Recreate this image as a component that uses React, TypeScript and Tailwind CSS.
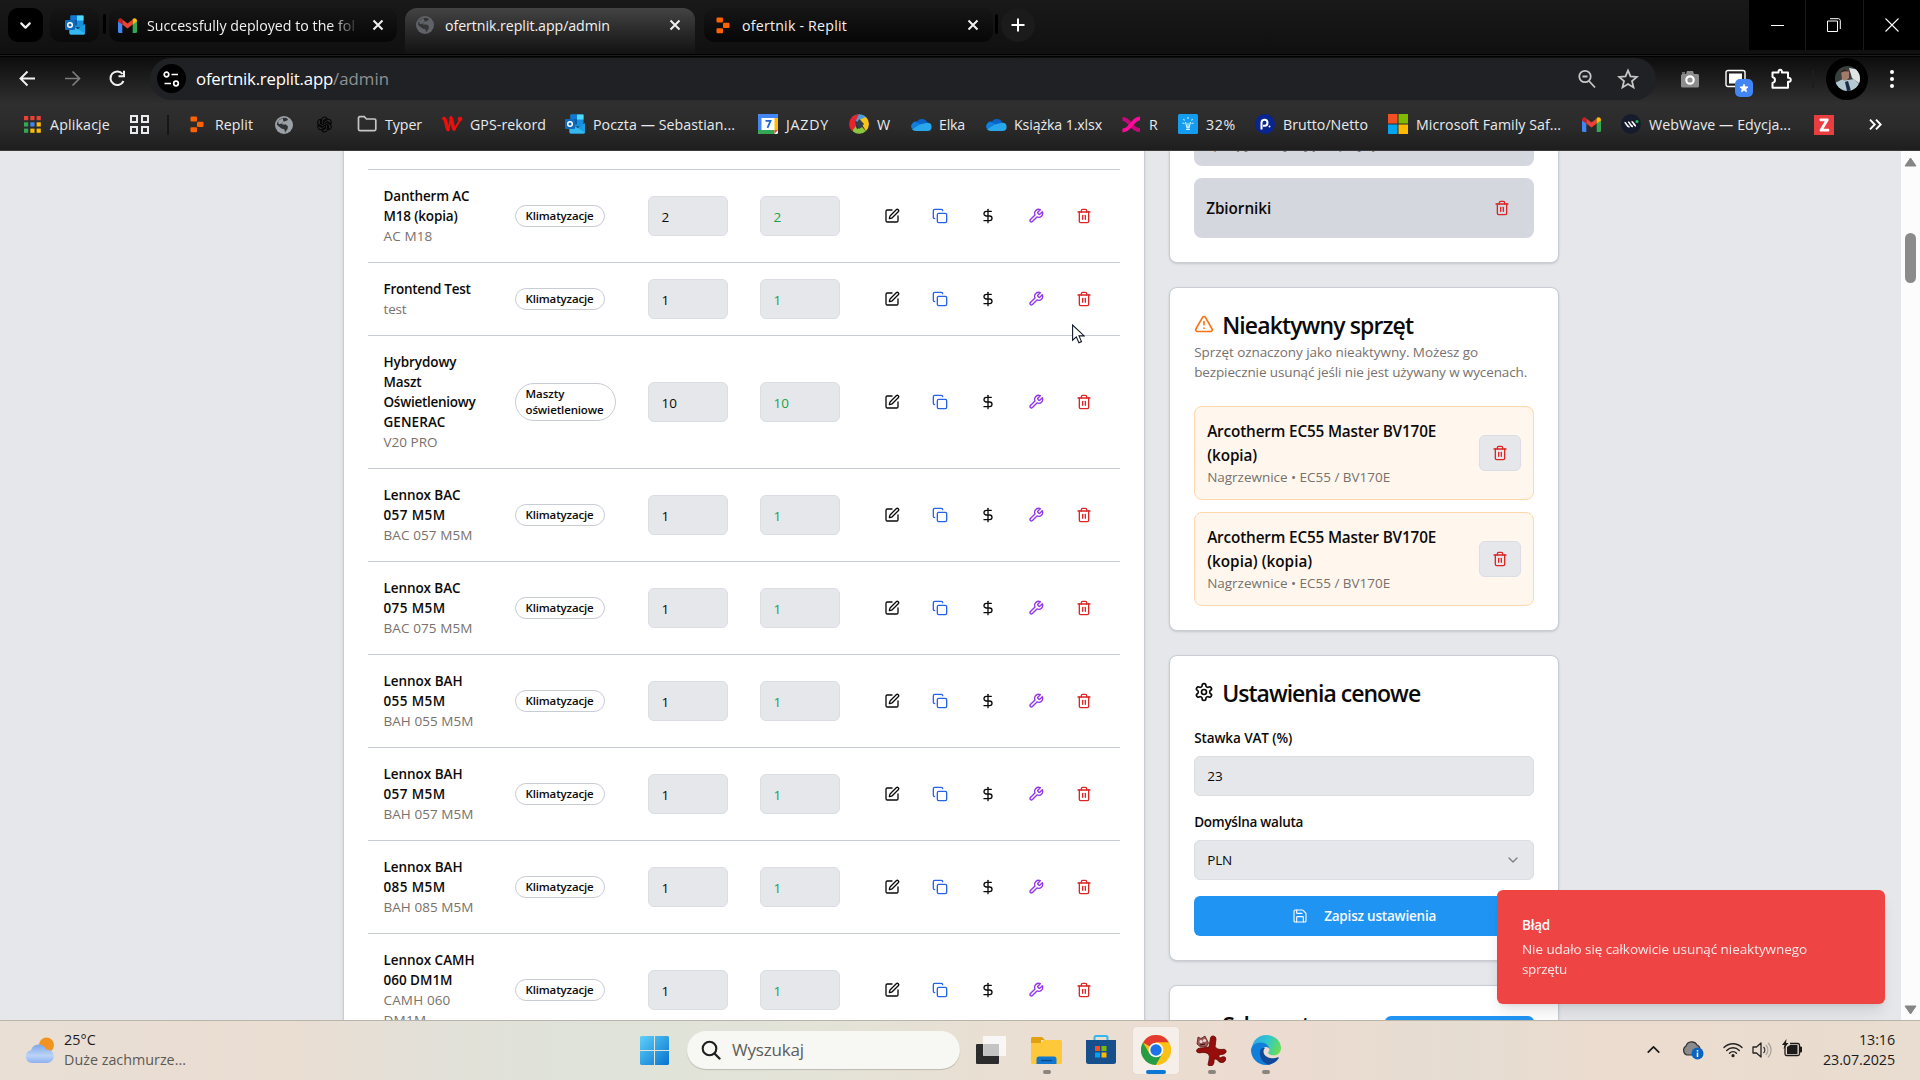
import { useLayoutEffect, useRef, type ReactNode } from "react";
import { ChevronDown, ChevronUp, Copy, DollarSign, SquarePen, Trash2, TriangleAlert, Save } from "lucide-react";

/* Single line of text whose tracking is adjusted so that it spans `w` pixels. */
function Fit({ w, children, className = "" }: { w: number; children: string; className?: string }) {
  const ref = useRef<HTMLSpanElement>(null);
  useLayoutEffect(() => {
    const el = ref.current;
    if (!el) return;
    el.style.letterSpacing = "0px";
    const natural = el.getBoundingClientRect().width;
    el.style.letterSpacing = `${(w - natural) / children.length}px`;
  }, [w, children]);
  return (
    <span ref={ref} className={`inline-block shrink-0 whitespace-nowrap ${className}`}>
      {children}
    </span>
  );
}

/* ---------- icons ---------- */

function Svg({ size = 20, h, box = "0 0 20 20", children }: { size?: number; h?: number; box?: string; children: ReactNode }) {
  return (
    <svg width={size} height={h ?? size} viewBox={box} fill="none" className="block shrink-0">
      {children}
    </svg>
  );
}

const Outlook = () => (
  <Svg>
    <rect x="5.5" y="0.5" width="13" height="12" rx="1" fill="#1490df" />
    <path d="M5.5 4.5h6.5v6H5.5z" fill="#0a5aa8" />
    <path d="M12 0.5h6.5v5H12z" fill="#50d9ff" />
    <path d="M5.5 0.5H12v4H5.5z" fill="#0f78d4" />
    <path d="M4.5 9l8 5 7.5-5v9a1.5 1.5 0 0 1-1.5 1.5h-12.500A1.500 1.500 0 0 1 4.500 18z" fill="#1b9de2" />
    <path d="M4.500 9l15.500 9.500a1.500 1.500 0 0 1-1.500 1H6a1.500 1.500 0 0 1-1.500-1.500z" fill="#35b8f1" />
    <rect x="0" y="5" width="10" height="10" rx="1" fill="#0f6cbd" />
    <circle cx="5" cy="10" r="2.300" stroke="#fff" strokeWidth="1.500" />
  </Svg>
);

const Gmail = () => (
  <Svg size={19} h={15} box="0 0 19 15">
    <path d="M0 3v10.500A1.500 1.500 0 0 0 1.500 15H4.300V6z" fill="#4285f4" />
    <path d="M19 3v10.500a1.500 1.500 0 0 1-1.500 1.500h-2.800V6z" fill="#34a853" />
    <path d="M4.300 1.500l5.200 4 5.200-4v5l-5.200 4-5.200-4z" fill="#ea4335" />
    <path d="M0 3C0 .4 2.600-.5 4.300.9v5.600L0 3.500z" fill="#c5221f" />
    <path d="M19 3c0-2.600-2.600-3.500-4.300-2.100v5.600L19 3.500z" fill="#fbbc04" />
  </Svg>
);

const Globe = ({ dim = false }: { dim?: boolean }) => (
  <Svg size={18} box="0 0 18 18">
    <circle cx="9" cy="9" r="9" fill={dim ? "#5f6368" : "#9aa0a6"} />
    <path
      d="M8 2c3-.5 4.500.5 5 2l-3.500 1.500H8L7 8.500h4l2 2-.5 2.500L10 16.500 9.500 13.500l-3-1L2 9C2 5 4.500 2.600 8 2z"
      fill={dim ? "#353535" : "#303134"}
    />
    <path d="M7.500 2L3 5l.8 3.200 3.200-.7 1.500-2z" fill={dim ? "#5f6368" : "#9aa0a6"} />
  </Svg>
);

const Replit = () => (
  <Svg size={14} h={17} box="0 0 14 17">
    <rect x="0.500" y="0.500" width="6.500" height="5" rx="1" fill="#ff6200" />
    <rect x="7" y="5.800" width="6.500" height="5.200" rx="1" fill="#ff6200" />
    <rect x="0.500" y="11.300" width="6.500" height="5" rx="1" fill="#ff6200" />
  </Svg>
);

const AppsGrid = () => {
  const c = ["#ea4335", "#ea4335", "#ea4335", "#34a853", "#4285f4", "#fbbc04", "#34a853", "#fbbc04", "#fbbc04"];
  return (
    <Svg size={17} box="0 0 17 17">
      {c.map((f, i) => (
        <rect key={i} x={(i % 3) * 6.300} y={Math.floor(i / 3) * 6.300} width="4.200" height="4.200" fill={f} />
      ))}
    </Svg>
  );
};

const FourSquares = () => (
  <Svg size={19} box="0 0 19 19">
    {[[1, 1], [12, 1], [1, 12], [12, 12]].map(([x, y]) => (
      <rect key={`${x}-${y}`} x={x} y={y} width="6" height="6" stroke="#e8eaed" strokeWidth="2" />
    ))}
  </Svg>
);

const OpenAi = () => (
  <Svg size={17} box="0 0 17 17">
    {[0, 60, 120, 180, 240, 300].map((r) => (
      <path key={r} d="M5.500 8.500V4a3 3 0 0 1 5.500-1.600L7.500 4.500v4" stroke="#050505" strokeWidth="1.100" transform={`rotate(${r} 8.500 8.500)`} />
    ))}
  </Svg>
);

const FolderOutline = () => (
  <Svg>
    <path d="M1.500 4A1.300 1.300 0 0 1 2.800 2.700h4.400L9.500 5h8A1.300 1.300 0 0 1 18.800 6.300v9a1.300 1.300 0 0 1-1.300 1.300H2.800a1.300 1.300 0 0 1-1.300-1.300z" stroke="#c4c7c5" strokeWidth="1.700" />
  </Svg>
);

const RedW = () => (
  <Svg size={21} h={16} box="0 0 21 16">
    <path d="M2 2.500C4 3 4 9 6 13.500M9 2c1.500 2 1 8 3 11" stroke="#f20d0d" strokeWidth="3.600" strokeLinecap="round" />
    <path d="M8.500 4L6.500 13M17.500 5L12.500 13" stroke="#f20d0d" strokeWidth="2" strokeLinecap="round" />
    <circle cx="18" cy="3" r="2.300" fill="#f20d0d" />
  </Svg>
);

const Calendar = () => (
  <Svg>
    <rect width="20" height="20" rx="1.500" fill="#fff" />
    <path d="M0 1.500A1.500 1.500 0 0 1 1.500 0h17A1.500 1.500 0 0 1 20 1.500V4H3.500v12H0z" fill="#4285f4" />
    <path d="M16.500 4H20v12h-3.500z" fill="#fbbc04" />
    <path d="M0 16h16.500v4H1.500A1.500 1.500 0 0 1 0 18.500z" fill="#34a853" />
    <path d="M16.500 16H20l-3.500 4z" fill="#ea4335" />
    <path d="M7.500 6.800h5L9.500 13.800" stroke="#1967d2" strokeWidth="1.800" />
  </Svg>
);

const Swirl = () => (
  <Svg>
    <path d="M10 10L3 3A9.800 9.800 0 0 1 10 .2c3 0 5 1 7 2.800z" fill="#4a9fd8" />
    <path d="M10 6l7-3a9.800 9.800 0 0 1 0 14l-3.500-5.500z" fill="#fcc419" />
    <path d="M8 15l5-2 4 4a9.800 9.800 0 0 1-13 .6L2.500 13 6 10z" fill="#8bc53f" />
    <path d="M8 4L6.500 8 7 12l-4 5A9.800 9.800 0 0 1 3 3c1.500-1.300 4-2.500 7-2.600z" fill="#e9222b" />
    <path d="M10.500 5l4.500 5-4.500 5-4-5z" fill="#33414f" />
  </Svg>
);

const OneDrive = () => (
  <Svg size={21} h={13} box="0 0 21 13">
    <path d="M6 3.500A6 6 0 0 1 16.500 5L12 8 4 12A4.300 4.300 0 0 1 6 3.500z" fill="#0a63c9" />
    <path d="M4.500 4A4.500 4.500 0 0 0 1 11l8-5z" fill="#1180dd" />
    <path d="M16.500 4.800A4.100 4.100 0 0 1 16.500 13H4.500A4.500 4.500 0 0 1 1 11.200L8.500 6.500z" fill="#28a8ea" />
  </Svg>
);

const PinkX = () => (
  <Svg size={21} h={17} box="0 0 21 17">
    <path d="M1.500 3c8 0 8 11 17.500 11" stroke="#c7087a" strokeWidth="4" />
    <path d="M19 2.500c-8 0-8.500 12-17.500 12" stroke="#ff0a9c" strokeWidth="3.800" />
  </Svg>
);

const Bulb = () => (
  <Svg>
    <rect width="20" height="20" rx="1.500" fill="#149cf0" />
    <path d="M7.500 8l1.500 6h2l1.500-6M8 15.500h4M10 9v5M10 3v2M5.500 5l1 1.500M14.500 5l-1 1.500M4.500 9l2 .5M15.500 9l-2 .5" stroke="#cdefff" strokeWidth="1.100" />
  </Svg>
);

const NavyP = () => (
  <Svg>
    <circle cx="10" cy="10" r="10" fill="#0a2490" />
    <path d="M6.500 15.500V8.500a3 3 0 1 1 3.200 3.300H8" stroke="#fff" strokeWidth="2" />
    <circle cx="14.500" cy="12.500" r="1" fill="#fff" />
  </Svg>
);

const MsSquares = () => (
  <Svg>
    <path d="M0 0h9.500v9.500H0z" fill="#f25022" />
    <path d="M10.500 0H20v9.500h-9.500z" fill="#7fba00" />
    <path d="M0 10.500h9.500V20H0z" fill="#00a4ef" />
    <path d="M10.500 10.500H20V20h-9.500z" fill="#ffb900" />
  </Svg>
);

const WebWave = () => (
  <Svg>
    <circle cx="10" cy="10" r="10" fill="#161c2b" />
    <path d="M3.500 8.500c2 0 2 4.500 5 4.500M7 8c2 0 2 4.500 5 4.500M10.500 7.500c2 0 2.500 4.500 4.500 4.500" stroke="#fff" strokeWidth="1.700" />
    <circle cx="16" cy="7.500" r="1.500" fill="#22c55e" />
  </Svg>
);

const ZIcon = () => (
  <Svg>
    <rect width="20" height="20" fill="#ea3d40" />
    <path d="M6.800 4.800h6.500L7 15.200h7" stroke="#fff" strokeWidth="2.800" strokeLinejoin="round" strokeLinecap="round" />
  </Svg>
);

const TabX = () => (
  <Svg size={12} box="0 0 12 12">
    <path d="M1.500 1.500l9 9M10.500 1.500l-9 9" stroke="#f1f1f1" strokeWidth="2" />
  </Svg>
);

const Star = ({ size = 22, fill = "none", stroke = "#c7c7c7" }: { size?: number; fill?: string; stroke?: string }) => (
  <Svg size={size} box="0 0 22 22">
    <path d="M11 2.500l2.500 5.900 6.400.5-4.900 4.200 1.500 6.300L11 16l-5.500 3.400L7 13.100 2.100 8.900l6.400-.5z" fill={fill} stroke={stroke} strokeWidth="1.800" />
  </Svg>
);

const Chrome = () => (
  <Svg size={30} box="0 0 30 30">
    <circle cx="15" cy="15" r="15" fill="#fbc116" />
    <path d="M15 15L2 7.500A15 15 0 0 1 28 7.500H15z" fill="#e33b2e" />
    <path d="M2 7.500A15 15 0 0 0 15 30l6.500-11.300L8.500 18.700z" fill="#269c47" />
    <path d="M15 7.500h13A15 15 0 0 1 15 30l6.500-11.200z" fill="#fbc116" />
    <circle cx="15" cy="15" r="7.300" fill="#fff" />
    <circle cx="15" cy="15" r="5.700" fill="#1a73e8" />
  </Svg>
);

const Edge = () => (
  <Svg size={30} box="0 0 30 30">
    <defs>
      <linearGradient id="eg" x1="0" y1="0" x2="30" y2="14" gradientUnits="userSpaceOnUse">
        <stop offset="0" stopColor="#2fa4e7" />
        <stop offset=".5" stopColor="#2fc5d2" />
        <stop offset="1" stopColor="#6be04f" />
      </linearGradient>
    </defs>
    <path d="M1 13C1.500 5.500 7.500 0 15 0c8.500 0 15 5.800 15 13 0 4.500-3 7.300-7 7.300-3.500 0-5.800-1.200-5.800-2.500 0-.8 1.300-1.300 1.300-3.300 0-2.500-3-5.500-7-5.500C6.500 9 2.500 10.500 1 13z" fill="url(#eg)" />
    <path d="M0 15c.3-4.500 4.500-7.500 9.500-7.500 5.500 0 9 3.500 9 7-.5-1.700-2-2.500-3.500-2.500-3 0-4.500 3-4.500 6 0 5.500 5 9.500 10 10.500-1.500 1-3.500 1.500-5.500 1.500C6.700 30 0 23.300 0 15z" fill="#0f7fd9" />
    <path d="M10.500 13.500C7 17 9 28 18 29.700c4-.7 7.500-3.200 9.700-6.500.4-.7-.2-1.200-.9-.9-1.500.6-3 .9-4.800.9-6 0-9.500-3.200-9.500-6.700 0-1.500.5-2.500 1.500-3.500-1.500-.5-2.800-.3-3.500.5z" fill="#10499a" />
  </Svg>
);

const RedSplat = () => (
  <Svg size={31} box="0 0 31 31">
    <path
      d="M13 12L14.500 3Q15 .5 17.500 1t2.500 3L19 12q3 3 6 2.500 4-1 5 1t-2 3.500l-5 1q-.5 2 1 3 3-2 5-1 1.500 2 0 4t-4 1.500-4-3q-2-1-3 0v3q-.5 3-3 3.500t-3-1.500L13 25q1-4-.5-6-3-2-6-1.500-4 1-5.500-.500T2 13.500z"
      fill="#960d0b"
      stroke="#5c0705"
      strokeWidth=".8"
    />
    <path d="M2 2l3 1.500L9 1l1.500 3 2 4-2 3.500-6 .5L1 9z" fill="#9a5b58" stroke="#5c0705" strokeWidth=".7" />
    <circle cx="5" cy="6.500" r="1.600" fill="#e8dcdc" />
    <circle cx="8.500" cy="5.500" r="1.600" fill="#e8dcdc" />
    <path d="M4 10l5-1" stroke="#3b0a09" />
  </Svg>
);

/* ---------- browser chrome ---------- */

function TabStrip() {
  return (
    <div className="flex h-[54px] items-start bg-gradient-to-b from-[#191919] to-[#101010] text-[14.2px] text-[#f1f1f1]">
      <div className="ml-2 mt-2 flex h-[34px] w-[35px] items-center justify-center rounded-[10px] bg-black">
        <ChevronDown size={17} strokeWidth={3} />
      </div>
      <div className="ml-[7px] mt-2 flex h-[34px] w-[49px] items-center justify-center rounded-[10px] bg-gradient-to-b from-[#161616] to-[#0a0a0a]">
        <Outlook />
      </div>
      <div className="ml-1 mt-[14px] h-5 w-[3px] rounded bg-black" />
      <div className="ml-[3px] mt-2 flex h-[34px] w-[288px] items-center rounded-[10px] bg-gradient-to-b from-[#161616] to-[#070707] pl-[9px]">
        <Gmail />
        <div className="ml-[10px] w-[209px] overflow-hidden pt-px [mask-image:linear-gradient(to_right,black_88%,transparent_102%)]">
          <Fit w={208}>Successfully deployed to the fol</Fit>
        </div>
        <div className="ml-[16px]"><TabX /></div>
      </div>
      <div className="ml-2 mt-2 flex h-[46px] w-[290px] items-start rounded-t-[12px] bg-gradient-to-b from-[#444444] to-[#121212] pl-[11px]">
        <div className="mt-[8px]"><Globe dim /></div>
        <div className="ml-[11px] mt-[8px] w-[219px] leading-[20px]">
          <Fit w={165}>ofertnik.replit.app/admin</Fit>
        </div>
        <div className="mt-[11px] ml-[5px]"><TabX /></div>
      </div>
      <div className="ml-[9px] mt-2 flex h-[34px] w-[289px] items-center rounded-[10px] bg-gradient-to-b from-[#161616] to-[#070707] pl-3">
        <Replit />
        <div className="ml-[12px] w-[218px] pt-px">
          <Fit w={105}>ofertnik - Replit</Fit>
        </div>
        <div className="ml-[7px]"><TabX /></div>
      </div>
      <div className="ml-[2px] mt-[14px] h-5 w-[3px] rounded bg-black" />
      <div className="ml-[3px] mt-2 flex size-[34px] items-center justify-center rounded-full bg-[#1b1b1b]">
        <Svg size={14} box="0 0 14 14">
          <path d="M7 .5v13M.5 7h13" stroke="#fff" strokeWidth="2" />
        </Svg>
      </div>
      <div className="ml-auto flex h-[50px] w-[171px] gap-px bg-[#1a1a1a]">
        <div className="flex flex-1 items-center justify-center bg-black">
          <div className="h-px w-[13px] bg-white" />
        </div>
        <div className="flex flex-1 items-center justify-center bg-black">
          <Svg size={14} box="0 0 14 14">
            <path d="M.5 3h10v10.500H.5z" stroke="#fff" />
            <path d="M3 .7h8.500A2 2 0 0 1 13.300 2.500V11" stroke="#fff" />
          </Svg>
        </div>
        <div className="flex flex-1 items-center justify-center bg-black">
          <Svg size={14} box="0 0 14 14">
            <path d="M.5.500l13 13M13.500.500l-13 13" stroke="#fff" strokeWidth="1.100" />
          </Svg>
        </div>
      </div>
    </div>
  );
}

function Toolbar() {
  return (
    <div className="flex h-[43px] items-center">
      <div className="ml-[19px]">
        <Svg size={17} box="0 0 17 17">
          <path d="M16 8.500H2M8.500 1.500l-7 7 7 7" stroke="#f1f1f1" strokeWidth="1.900" />
        </Svg>
      </div>
      <div className="ml-[28px]">
        <Svg size={17} box="0 0 17 17">
          <path d="M1 8.500h14M8.500 1.500l7 7-7 7" stroke="#7d7d7d" strokeWidth="1.700" />
        </Svg>
      </div>
      <div className="ml-[28px]">
        <Svg size={17} box="0 0 17 17">
          <path d="M14.500 11A6.800 6.800 0 1 1 13.600 4M15 .8v5.500H9.500" stroke="#f1f1f1" strokeWidth="2" />
        </Svg>
      </div>
      <div className="ml-[24px] flex h-[42px] w-[1506px] items-center rounded-full bg-[#202124] pl-[7px]">
        <div className="flex size-[29px] items-center justify-center rounded-full bg-black">
          <Svg size={17} h={16} box="0 0 17 16">
            <circle cx="3.500" cy="3.500" r="2.300" stroke="#fff" strokeWidth="1.700" />
            <circle cx="13" cy="12.500" r="2.300" stroke="#fff" strokeWidth="1.700" />
            <path d="M8.500 3.500H15M1.500 12.500H8" stroke="#fff" strokeWidth="1.700" />
          </Svg>
        </div>
        <div className="ml-[10px] flex flex-1 pt-px text-[16.800px] leading-6 text-white">
          <Fit w={137}>ofertnik.replit.app</Fit>
          <Fit w={56} className="text-[#8f9194]">/admin</Fit>
        </div>
        <Svg size={20}>
          <circle cx="8" cy="7.500" r="5.700" stroke="#c7c7c7" strokeWidth="1.800" />
          <path d="M12 12l6 6.500M5.500 7.500h5" stroke="#c7c7c7" strokeWidth="1.800" />
        </Svg>
        <div className="ml-[20px] mr-[17px]"><Star /></div>
      </div>
      <div className="ml-[24px] pt-px">
        <Svg size={20}>
          <path d="M2 5h4l1-3h6l1 3h3.500A1.500 1.500 0 0 1 19 6.500V17a1.500 1.500 0 0 1-1.500 1.500h-15A1.500 1.500 0 0 1 1 17V6.500z" fill="#8c8c8c" />
          <path d="M2 4h3" stroke="#8c8c8c" strokeWidth="1.500" />
          <circle cx="10" cy="11" r="3.700" fill="#8c8c8c" stroke="#fff" strokeWidth="2.200" />
        </Svg>
      </div>
      <div className="relative ml-[25px]">
        <Svg size={22} h={20} box="0 0 22 20">
          <rect x="1" y="1.500" width="19" height="16" rx="2" stroke="#fff" strokeWidth="1.400" fill="#1c1c1c" />
          <path d="M4 4.500h13v10H4z" fill="#fff" />
        </Svg>
        <div className="absolute left-[10px] top-[10px] flex size-[18px] items-center justify-center rounded-[5px] bg-[#4285f4]">
          <Star size={10} fill="#fff" stroke="#fff" />
        </div>
      </div>
      <div className="ml-[23px]">
        <Svg size={22} box="0 0 22 22">
          <path d="M2.500 4.500h6q-.2-2.700 1.700-2.700t1.700 2.700H18v5.300q2.800-.2 2.800 2t-2.800 2v6H2.500V15q2.500-.8 2.500-3t-2.500-3z" stroke="#fff" strokeWidth="2" strokeLinejoin="round" />
        </Svg>
      </div>
      <div className="ml-[20px] h-[18px] w-[2px] bg-[#1d1d1d]" />
      <div className="ml-[12px] flex size-[42px] items-center justify-center rounded-full bg-black">
        <Svg size={25} box="0 0 25 25">
          <clipPath id="av"><circle cx="12.500" cy="12.500" r="12.500" /></clipPath>
          <g clipPath="url(#av)">
            <path d="M0 0h25v25H0z" fill="#37403f" />
            <path d="M14 2l11 2v14l-8-6z" fill="#dfe3e4" />
            <path d="M0 17l8-4 5 1 6-1 6 6v6H0z" fill="#b3c8d1" />
            <path d="M6 5q4-4 8 0v7q-4 5-7 1z" fill="#a3796a" />
            <path d="M5.500 6q4-6 9 0l-1-.5q-4-1-7 1z" fill="#2b2422" />
            <path d="M10 16l3-1 3 10h-4z" fill="#1b2b47" />
          </g>
        </Svg>
      </div>
      <div className="ml-[21px]">
        <Svg size={6} h={20} box="0 0 6 20">
          <circle cx="3" cy="3" r="2" fill="#fff" />
          <circle cx="3" cy="10" r="2" fill="#fff" />
          <circle cx="3" cy="17" r="2" fill="#fff" />
        </Svg>
      </div>
    </div>
  );
}

function Bookmark({ box, icon, label, w = 0 }: { box: string; icon: ReactNode; label?: string; w?: number }) {
  return (
    <div className={`flex shrink-0 items-center gap-2 ${box}`}>
      <div className="flex w-5 shrink-0 justify-center">{icon}</div>
      {label && <Fit w={w}>{label}</Fit>}
    </div>
  );
}

function Bookmarks() {
  return (
    <div className="flex h-[49px] items-center pl-[22px] text-[14.200px] text-[#e8eaed]">
      <Bookmark box="w-[107px]" icon={<AppsGrid />} label="Aplikacje" w={60} />
      <Bookmark box="w-[38px]" icon={<FourSquares />} />
      <div className="mr-[18px] h-5 w-[2px] bg-[#161616]" />
      <Bookmark box="w-[87px]" icon={<Replit />} label="Replit" w={38} />
      <Bookmark box="w-10" icon={<Globe />} />
      <Bookmark box="w-[43px]" icon={<OpenAi />} />
      <Bookmark box="w-[85px]" icon={<FolderOutline />} label="Typer" w={37} />
      <Bookmark box="w-[123px]" icon={<RedW />} label="GPS-rekord" w={76} />
      <Bookmark box="w-[193px]" icon={<Outlook />} label="Poczta — Sebastian..." w={142} />
      <Bookmark box="w-[91px]" icon={<Calendar />} label="JAZDY" w={43} />
      <Bookmark box="w-[62px]" icon={<Swirl />} label="W" w={14} />
      <Bookmark box="w-[75px]" icon={<OneDrive />} label="Elka" w={26} />
      <Bookmark box="w-[135px]" icon={<OneDrive />} label="Książka 1.xlsx" w={88} />
      <Bookmark box="w-[57px]" icon={<PinkX />} label="R" w={9} />
      <Bookmark box="w-[77px]" icon={<Bulb />} label="32%" w={30} />
      <Bookmark box="w-[133px]" icon={<NavyP />} label="Brutto/Netto" w={85} />
      <Bookmark box="w-[193px]" icon={<MsSquares />} label="Microsoft Family Saf..." w={145} />
      <Bookmark box="w-10" icon={<Gmail />} />
      <Bookmark box="w-[193px]" icon={<WebWave />} label="WebWave — Edycja..." w={142} />
      <Bookmark box="w-[51px]" icon={<ZIcon />} />
      <Bookmark
        box="w-5"
        icon={
          <Svg size={13} h={11} box="0 0 13 11">
            <path d="M1 .7l4.700 4.800L1 10.300M7 .7l4.700 4.800L7 10.300" stroke="#fff" strokeWidth="1.900" />
          </Svg>
        }
      />
    </div>
  );
}

/* ---------- equipment table ---------- */

type Line = [string, number];
type Row = { name: Line[]; model: Line[]; tag: Line[]; tagBox: string; total: string };

const klima: Line[] = [["Klimatyzacje", 68]];
const rows: Row[] = [
  { name: [["Dantherm AC", 86], ["M18 (kopia)", 74]], model: [["AC M18", 49]], tag: klima, tagBox: "w-[90px]", total: "2" },
  { name: [["Frontend Test", 87]], model: [["test", 23]], tag: klima, tagBox: "w-[90px]", total: "1" },
  {
    name: [["Hybrydowy", 73], ["Maszt", 38], ["Oświetleniowy", 92], ["GENERAC", 62]],
    model: [["V20 PRO", 54]],
    tag: [["Maszty", 39], ["oświetleniowe", 78]],
    tagBox: "w-[101px]",
    total: "10",
  },
  { name: [["Lennox BAC", 77], ["057 M5M", 62]], model: [["BAC 057 M5M", 89]], tag: klima, tagBox: "w-[90px]", total: "1" },
  { name: [["Lennox BAC", 77], ["075 M5M", 62]], model: [["BAC 075 M5M", 89]], tag: klima, tagBox: "w-[90px]", total: "1" },
  { name: [["Lennox BAH", 79], ["055 M5M", 62]], model: [["BAH 055 M5M", 90]], tag: klima, tagBox: "w-[90px]", total: "1" },
  { name: [["Lennox BAH", 79], ["057 M5M", 62]], model: [["BAH 057 M5M", 90]], tag: klima, tagBox: "w-[90px]", total: "1" },
  { name: [["Lennox BAH", 79], ["085 M5M", 62]], model: [["BAH 085 M5M", 90]], tag: klima, tagBox: "w-[90px]", total: "1" },
  { name: [["Lennox CAMH", 91], ["060 DM1M", 69]], model: [["CAMH 060", 67], ["DM1M", 43]], tag: klima, tagBox: "w-[90px]", total: "1" },
];

const WrenchIcon = () => (
  <svg width="16" height="16" viewBox="0 0 24 24" fill="none" stroke="currentColor" strokeWidth="2" strokeLinecap="round" strokeLinejoin="round">
    <path d="M14.700 6.300a1 1 0 0 0 0 1.400l1.600 1.600a1 1 0 0 0 1.400 0l3.770-3.770a6 6 0 0 1-7.940 7.940l-6.910 6.910a2.120 2.120 0 0 1-3-3l6.910-6.910a6 6 0 0 1 7.940-7.940l-3.760 3.760z" />
  </svg>
);

const GearIcon = () => (
  <svg width="20" height="20" viewBox="0 0 24 24" fill="none" stroke="currentColor" strokeWidth="2" strokeLinecap="round" strokeLinejoin="round">
    <path d="M12.220 2h-.44a2 2 0 0 0-2 2v.18a2 2 0 0 1-1 1.730l-.43.25a2 2 0 0 1-2 0l-.15-.08a2 2 0 0 0-2.730.73l-.22.38a2 2 0 0 0 .73 2.730l.15.1a2 2 0 0 1 1 1.720v.51a2 2 0 0 1-1 1.740l-.15.09a2 2 0 0 0-.73 2.730l.22.38a2 2 0 0 0 2.730.73l.15-.08a2 2 0 0 1 2 0l.43.25a2 2 0 0 1 1 1.730V20a2 2 0 0 0 2 2h.44a2 2 0 0 0 2-2v-.18a2 2 0 0 1 1-1.730l.43-.25a2 2 0 0 1 2 0l.15.08a2 2 0 0 0 2.730-.73l.22-.39a2 2 0 0 0-.73-2.730l-.15-.08a2 2 0 0 1-1-1.740v-.5a2 2 0 0 1 1-1.740l.15-.09a2 2 0 0 0 .73-2.730l-.22-.38a2 2 0 0 0-2.730-.73l-.15.08a2 2 0 0 1-2 0l-.43-.25a2 2 0 0 1-1-1.730V4a2 2 0 0 0-2-2z" />
    <circle cx="12" cy="12" r="3" />
  </svg>
);

function Table() {
  return (
    <div className="h-full w-[802.67px] shrink-0 border-x border-[#c8ccd5] bg-white px-6 pt-[18px] shadow-sm">
      {rows.map((r, i) => (
        <div key={i} className="flex items-center border-t border-[#c8ccd5] text-[13.500px] leading-5">
          <div className="w-[131px] shrink-0 py-4 pl-4">
            {r.name.map(([t, w]) => (
              <div key={t} className="h-5 font-semibold text-[#0c0a09]"><Fit w={w}>{t}</Fit></div>
            ))}
            {r.model.map(([t, w]) => (
              <div key={t} className="h-5 text-[#78716c]"><Fit w={w}>{t}</Fit></div>
            ))}
          </div>
          <div className="w-[133px] shrink-0 pl-4">
            <div className={`flex flex-col rounded-full border border-[#c8ccd5] px-[10px] py-[2px] text-[11.500px] font-semibold leading-4 text-[#0c0a09] ${r.tagBox}`}>
              {r.tag.map(([t, w]) => (
                <Fit key={t} w={w} className="h-4 self-start">{t}</Fit>
              ))}
            </div>
          </div>
          <div className="w-28 shrink-0 px-4">
            <div className="flex h-10 items-center rounded-md border border-[#dadde3] bg-[#e5e7eb] px-[13px] pt-px text-[#0c0a09]">{r.total}</div>
          </div>
          <div className="w-28 shrink-0 px-4">
            <div className="flex h-10 items-center rounded-md border border-[#dadde3] bg-[#e5e7eb] px-[13px] pt-px text-[#16a34a]">{r.total}</div>
          </div>
          <div className="flex gap-8 pl-7 text-[#0c0a09]">
            <SquarePen size={16} />
            <Copy size={16} className="text-[#2563eb]" />
            <DollarSign size={16} />
            <span className="text-[#9333ea]"><WrenchIcon /></span>
            <Trash2 size={16} className="text-[#dc2626]" />
          </div>
        </div>
      ))}
    </div>
  );
}

/* ---------- right column ---------- */

function InactiveItem({ lines }: { lines: Line[] }) {
  return (
    <div className="flex h-[94px] items-center justify-between rounded-lg border border-[#fed7aa] bg-[#fff7ed] p-3">
      <div>
        {lines.map(([t, w]) => (
          <div key={t} className="h-6 text-[15.300px] font-semibold leading-6 text-[#0c0a09]"><Fit w={w}>{t}</Fit></div>
        ))}
        <div className="h-5 text-[13.500px] leading-5 text-[#78716c]"><Fit w={183}>Nagrzewnice • EC55 / BV170E</Fit></div>
      </div>
      <div className="flex h-9 w-[42px] items-center justify-center rounded-md border border-[#dadde3] bg-[#e5e7eb]">
        <Trash2 size={16} className="text-[#dc2626]" />
      </div>
    </div>
  );
}

function Sidebar() {
  return (
    <div className="flex w-[390px] shrink-0 flex-col gap-6 text-[13.500px] leading-5 text-[#0c0a09]">
      <div className="flex h-[112px] flex-col gap-3 rounded-b-lg border border-t-0 border-[#c8ccd5] bg-white px-6 shadow-sm">
        <div className="flex h-[15px] items-end overflow-hidden rounded-b-lg bg-[#d4d7de] px-3 pb-3 text-[#78716c]">
          <Fit w={188}>Sprzęty do wynajęcia, przyłącza</Fit>
        </div>
        <div className="flex h-[60px] items-center justify-between rounded-lg bg-[#d4d7de] pl-3 pr-6 text-[15.300px] font-semibold">
          <Fit w={65}>Zbiorniki</Fit>
          <Trash2 size={16} className="text-[#dc2626]" />
        </div>
      </div>

      <div className="h-[344px] rounded-lg border border-[#c8ccd5] bg-white p-6 shadow-sm">
        <div className="flex h-6 items-center gap-2 text-[23px] font-semibold">
          <TriangleAlert size={20} className="text-[#f97316]" />
          <Fit w={191} className="pt-[2px]">Nieaktywny sprzęt</Fit>
        </div>
        <div className="mt-[6px] text-[#78716c]">
          <div className="h-5"><Fit w={284}>Sprzęt oznaczony jako nieaktywny. Możesz go</Fit></div>
          <div className="h-5"><Fit w={333}>bezpiecznie usunąć jeśli nie jest używany w wycenach.</Fit></div>
        </div>
        <div className="mt-6 flex flex-col gap-3">
          <InactiveItem lines={[["Arcotherm EC55 Master BV170E", 229], ["(kopia)", 50]]} />
          <InactiveItem lines={[["Arcotherm EC55 Master BV170E", 229], ["(kopia) (kopia)", 105]]} />
        </div>
      </div>

      <div className="h-[306px] rounded-lg border border-[#c8ccd5] bg-white p-6 shadow-sm">
        <div className="flex h-6 items-center gap-2 text-[23px] font-semibold">
          <GearIcon />
          <Fit w={198} className="pt-[2px]">Ustawienia cenowe</Fit>
        </div>
        <div className="mt-6 h-7 font-semibold"><Fit w={98}>Stawka VAT (%)</Fit></div>
        <div className="flex h-10 items-center rounded-md border border-[#dadde3] bg-[#e5e7eb] px-3">23</div>
        <div className="mt-4 h-7 font-semibold"><Fit w={109}>Domyślna waluta</Fit></div>
        <div className="flex h-10 items-center justify-between rounded-md border border-[#dadde3] bg-[#e5e7eb] px-3">
          <Fit w={25}>PLN</Fit>
          <ChevronDown size={16} className="text-[#7d7f83]" />
        </div>
        <div className="mt-4 flex h-10 items-center justify-center gap-4 rounded-md bg-[#2094f3] font-semibold text-[#f8fafc]">
          <Save size={16} strokeWidth={1.700} />
          <Fit w={112}>Zapisz ustawienia</Fit>
        </div>
      </div>

      <div className="h-[200px] rounded-t-lg border border-[#c8ccd5] bg-white p-6 shadow-sm">
        <div className="flex items-start justify-between">
          <div className="h-6 pl-7 pt-[3px] text-[23px] font-semibold leading-6"><Fit w={98}>Schematy</Fit></div>
          <div className="mt-[6px] h-9 w-[149px] rounded-md bg-[#2094f3]" />
        </div>
      </div>
    </div>
  );
}

function Scrollbar() {
  return (
    <div className="flex h-full w-[19px] flex-col items-center bg-[#fcfcfc]">
      <div className="mt-[6px]">
        <Svg size={13} h={10} box="0 0 13 10">
          <path d="M6.500 1L12 9H1z" fill="#858585" stroke="#858585" strokeLinejoin="round" />
        </Svg>
      </div>
      <div className="mt-[66px] h-[50px] w-[11px] rounded-full bg-[#8b8b8b]" />
      <div className="mb-[5px] mt-auto">
        <Svg size={13} h={10} box="0 0 13 10">
          <path d="M6.500 9L12 1H1z" fill="#858585" stroke="#858585" strokeLinejoin="round" />
        </Svg>
      </div>
    </div>
  );
}

/* ---------- taskbar ---------- */

function Taskbar() {
  return (
    <div className="flex h-[60px] items-center border-t border-[#b9b5ac] bg-[linear-gradient(90deg,#e9dfd5_0%,#eaddd2_15%,#e3e0d8_22%,#dfe3d9_30%,#e3e3d8_42%,#e9dfd2_52%,#ecdbd0_66%,#e6ddd2_76%,#ecdccf_84%,#e8ddd0_100%)] pb-px text-[14.300px] leading-5 text-[#1b1b1b]">
      <div className="ml-[24px]">
        <Svg size={31} h={27} box="0 0 31 27">
          <defs>
            <linearGradient id="cl" x1="0" y1="0" x2="0" y2="1">
              <stop offset="0" stopColor="#7fa7ea" />
              <stop offset=".6" stopColor="#bcd3f7" />
              <stop offset="1" stopColor="#8db1ef" />
            </linearGradient>
          </defs>
          <circle cx="22.500" cy="8" r="7.500" fill="#f2931f" />
          <path d="M7.500 26A6.500 6.500 0 0 1 7 13.200 8 8 0 0 1 22 12.500 6.800 6.800 0 0 1 24 26z" fill="url(#cl)" />
        </Svg>
      </div>
      <div className="ml-[9px] flex w-[576px] flex-col pb-px">
        <Fit w={32} className="self-start">25°C</Fit>
        <Fit w={122} className="self-start text-[#5c5955]">Duże zachmurze...</Fit>
      </div>
      <Svg size={29} box="0 0 29 29">
        <defs>
          <linearGradient id="wn" x1="0" y1="0" x2="29" y2="29" gradientUnits="userSpaceOnUse">
            <stop offset="0" stopColor="#5fd0fb" />
            <stop offset="1" stopColor="#0673cf" />
          </linearGradient>
        </defs>
        <path d="M1 0h13v14H0V1zM15 0h13l1 1v13H15zM0 15h14v14H1l-1-1zM15 15h14v13l-1 1H15z" fill="url(#wn)" />
      </Svg>
      <div className="ml-[18px] flex h-[38px] w-[273px] items-center rounded-full bg-[#f7f7f3] pl-[14px] text-[17px] text-[#5d5d5b] shadow-[0_1px_1px_rgba(0,0,0,0.18)]">
        <Svg size={20}>
          <circle cx="8.500" cy="8.500" r="6.800" stroke="#1f1f1f" strokeWidth="2.100" />
          <path d="M13.500 13.500l5 5" stroke="#1f1f1f" strokeWidth="2.300" strokeLinecap="round" />
        </Svg>
        <Fit w={72} className="ml-[11px]">Wyszukaj</Fit>
      </div>
      <div className="ml-[16px]">
        <Svg size={30} h={29} box="0 0 30 29">
          <rect y="8" width="23" height="20" rx="1" fill="#2c2c2c" />
          <rect x="7" y="0" width="23" height="20" rx="1" fill="#fdfdfd" fillOpacity=".82" />
          <rect x="7.500" y="8" width="15.500" height="12" fill="#c4c4c4" />
        </Svg>
      </div>
      <div className="ml-[25px] flex h-full w-[31px] flex-col items-center pt-[16px]">
        <Svg size={31} h={28} box="0 0 31 28">
          <path d="M0 1.500A1.500 1.500 0 0 1 1.500 0H11l3 3h-4v5H0z" fill="#e0a010" />
          <path d="M0 6h10l3-3h16.500A1.500 1.500 0 0 1 31 4.500v21A1.500 1.500 0 0 1 29.500 27h-28A1.500 1.500 0 0 1 0 25.500z" fill="#fdc93a" />
          <path d="M5.500 27v-5A2.500 2.500 0 0 1 8 19.500h15a2.500 2.500 0 0 1 2.500 2.500v5z" fill="#1377cf" />
          <path d="M10 23.500h11" stroke="#0a4a8c" strokeWidth="1.400" />
        </Svg>
        <div className="mt-[5px] h-1 w-2 rounded-full bg-[#8b857d]" />
      </div>
      <div className="ml-[24px]">
        <Svg size={30} h={30} box="0 0 30 30">
          <path d="M8.500 5V2.500A1.500 1.500 0 0 1 10 1h10a1.500 1.500 0 0 1 1.500 1.500V5" stroke="#32b8ea" strokeWidth="2" />
          <path d="M0 5h30v21.500A2.500 2.500 0 0 1 27.500 29h-25A2.500 2.500 0 0 1 0 26.500z" fill="#174f8c" />
          <path d="M9 11h5v5H9z" fill="#f25022" />
          <path d="M15.500 11h5v5h-5z" fill="#7fba00" />
          <path d="M9 17.500h5v5H9z" fill="#00a4ef" />
          <path d="M15.500 17.500h5v5h-5z" fill="#ffb900" />
        </Svg>
      </div>
      <div className="ml-[16px] flex h-[49px] w-[48px] flex-col items-center rounded-[5px] border border-[#e6dad1] bg-[#f6efe9] pt-[8px]">
        <Chrome />
        <div className="mt-[5px] h-1 w-5 rounded-full bg-[#0a78d4]" />
      </div>
      <div className="ml-[16px] flex h-full w-[31px] flex-col items-center pt-[14px]">
        <RedSplat />
        <div className="mt-[4px] h-1 w-2 rounded-full bg-[#8b857d]" />
      </div>
      <div className="ml-[24px] flex h-full w-[30px] flex-col items-center pt-[14px]">
        <Edge />
        <div className="mt-[5px] h-1 w-2 rounded-full bg-[#8b857d]" />
      </div>
      <div className="ml-auto flex items-center pb-px">
        <ChevronUp size={21} strokeWidth={2} />
        <div className="ml-[18px]">
          <Svg size={22} box="0 0 22 22">
            <path d="M5 16A5 5 0 0 1 4 7a6 6 0 0 1 11-1 5 5 0 0 1 3 4.500L10 16z" fill="#8b8b8b" stroke="#333" strokeWidth="1.200" />
            <circle cx="15.500" cy="14.500" r="6" fill="#0b64bf" />
            <path d="M15.500 13.500v4.500M15.500 11v1.400" stroke="#fff" strokeWidth="1.500" />
          </Svg>
        </div>
        <div className="ml-[19px]">
          <Svg size={20} h={17} box="0 0 20 17">
            <path d="M1 6.500a12.700 12.700 0 0 1 18 0M3.700 9.400a8.900 8.900 0 0 1 12.600 0M6.500 12.200a5 5 0 0 1 7 0" stroke="#222" strokeWidth="1.400" strokeLinecap="round" />
            <circle cx="10" cy="14.700" r="1.600" fill="#222" />
          </Svg>
        </div>
        <div className="ml-[9px]">
          <Svg size={20} h={18} box="0 0 20 18">
            <path d="M1 6h3.500L9 2v14l-4.500-4H1z" stroke="#222" strokeWidth="1.300" strokeLinejoin="round" />
            <path d="M11.500 6a4 4 0 0 1 0 6" stroke="#333" strokeWidth="1.200" />
            <path d="M13.800 4a7 7 0 0 1 0 10M16 1.800a10 10 0 0 1 0 14.400" stroke="#aaa39b" strokeWidth="1.200" />
          </Svg>
        </div>
        <div className="ml-[10px] pb-1">
          <Svg size={21} h={18} box="0 0 21 18">
            <path d="M3 7v8a1.500 1.500 0 0 0 1.500 1.500H16a1.500 1.500 0 0 0 1.500-1.500V6A1.500 1.500 0 0 0 16 4.500H8" stroke="#1b1b1b" strokeWidth="1.300" />
            <path d="M5 8l3-2h7.500v9H5z" fill="#1b1b1b" />
            <path d="M18 8h1.500v5H18z" fill="#1b1b1b" stroke="#1b1b1b" />
            <path d="M4.500 0L0 6h2.500L1.500 10 6.500 4H4z" fill="#1b1b1b" />
          </Svg>
        </div>
        <div className="ml-[19px] mr-[25px] flex w-[73px] flex-col items-end">
          <Fit w={36}>13:16</Fit>
          <Fit w={72}>23.07.2025</Fit>
        </div>
      </div>
    </div>
  );
}

export default function App() {
  return (
    <div className="relative flex h-[1080px] w-[1920px] flex-col overflow-hidden bg-[#e5e7eb] font-['Open_Sans',sans-serif]">
      <header className="h-[151px] shrink-0">
        <TabStrip />
        <div className="h-[3px] border-y border-black bg-[#1c1c1c]" />
        <div className="h-[94px] border-b border-[#3a3a3a] bg-[linear-gradient(180deg,#0d0d0d_0%,#2f2f2f_50%,#2b2b2b_75%,#1e1e1e_100%)]">
          <Toolbar />
          <Bookmarks />
        </div>
      </header>
      <main className="flex h-[869px] shrink-0 overflow-hidden">
        <div className="flex w-[1901px] items-start gap-6 overflow-hidden pl-[342.5px]">
          <Table />
          <Sidebar />
        </div>
        <Scrollbar />
      </main>
      <Taskbar />

      <div className="absolute left-[1497px] top-[890px] flex h-[114px] w-[388px] flex-col rounded-md bg-[#ef4444] px-[25px] pt-[25px] text-[13.500px] leading-5 text-[#f8fafc] shadow-lg">
        <Fit w={28} className="self-start font-semibold">Błąd</Fit>
        <Fit w={285} className="mt-1 self-start opacity-90">Nie udało się całkowicie usunąć nieaktywnego</Fit>
        <Fit w={45} className="self-start opacity-90">sprzętu</Fit>
      </div>

      <svg width="13" height="20" viewBox="0 0 13 20" className="absolute left-[1072px] top-[324px]">
        <path d="M.6 1v15.200l3.700-3.400 2.600 5.900 2.600-1.100-2.500-5.700h5.200z" fill="#fff" stroke="#111827" strokeWidth="1.100" />
      </svg>
    </div>
  );
}
